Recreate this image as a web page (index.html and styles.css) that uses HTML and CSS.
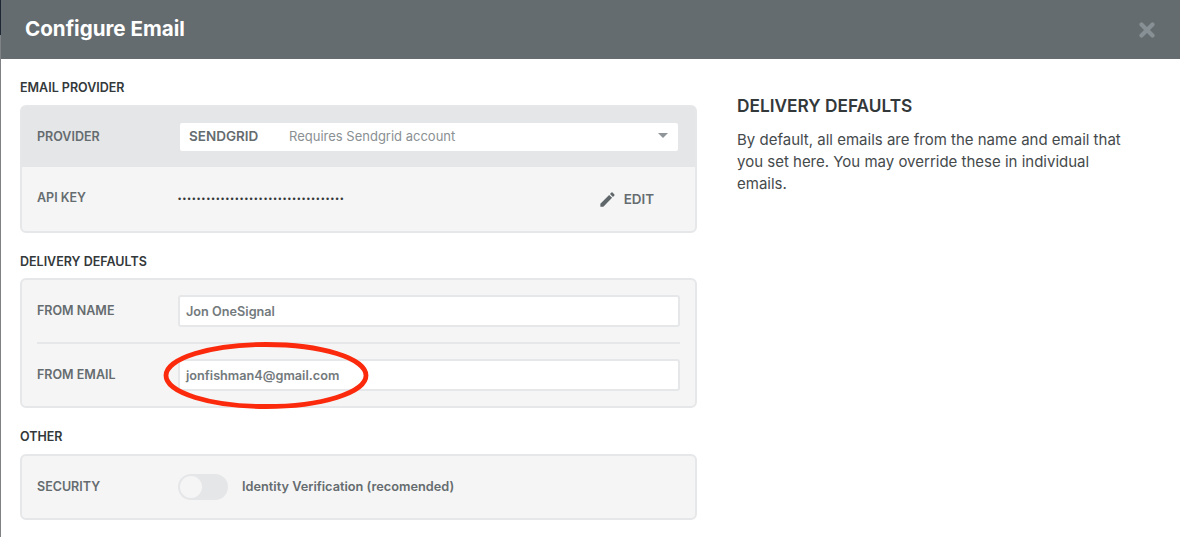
FILE: index.html
```html
<!DOCTYPE html>
<html lang="en">
<head>
<meta charset="utf-8">
<title>Configure Email</title>
<link rel="stylesheet" href="styles.css">
</head>
<body>
<div class="modal">
  <header class="modal-head">
    <h1 class="modal-title">Configure Email</h1>
    <svg class="close" width="16" height="16" viewBox="0 0 16 16"><path d="M2.500 2.500l11 11M13.500 2.500l-11 11" stroke="#879094" stroke-width="4.200" stroke-linecap="round"/></svg>
  </header>
  <div class="modal-body">
    <main class="form-col">
      <h2 class="section-label">EMAIL PROVIDER</h2>
      <section class="panel panel-provider">
        <div class="row row-select">
          <span class="row-label label-wide">PROVIDER</span>
          <div class="select">
            <span class="select-name">SENDGRID</span>
            <span class="select-note">Requires Sendgrid account</span>
            <span class="caret"></span>
          </div>
        </div>
        <div class="row row-key">
          <span class="row-label label-key">API KEY</span>
          <span class="dots">•••••••••••••••••••••••••••••••••••</span>
          <span class="edit">
            <svg width="19" height="19" viewBox="0 0 24 24"><path fill="#5f676a" d="M3 17.250V21h3.750L17.810 9.940l-3.750-3.750L3 17.250zM20.710 7.040a1 1 0 0 0 0-1.410l-2.340-2.340a1 1 0 0 0-1.410 0l-1.830 1.830 3.750 3.750 1.830-1.830z"/></svg>
            EDIT
          </span>
        </div>
      </section>
      <h2 class="section-label">DELIVERY DEFAULTS</h2>
      <section class="panel panel-defaults">
        <div class="row row-field row-divided">
          <span class="row-label">FROM NAME</span>
          <div class="input">Jon OneSignal</div>
        </div>
        <div class="row row-field">
          <span class="row-label">FROM EMAIL</span>
          <div class="input">jonfishman4@gmail.com</div>
          <svg class="annotation" width="210" height="70" viewBox="0 0 210 70"><ellipse cx="105" cy="34.500" rx="100" ry="31" fill="none" stroke="#fb2a0c" stroke-width="4.800"/></svg>
        </div>
      </section>
      <h2 class="section-label">OTHER</h2>
      <section class="panel panel-other">
        <div class="row row-toggle">
          <span class="row-label">SECURITY</span>
          <span class="toggle"><span class="knob"></span></span>
          <span class="toggle-text">Identity Verification (recomended)</span>
        </div>
      </section>
    </main>
    <aside class="help-col">
      <h2 class="help-title">DELIVERY DEFAULTS</h2>
      <p class="help-text">By default, all emails are from the name and email that you set here. You may override these in individual emails.</p>
    </aside>
  </div>
</div>
</body>
</html>
```
FILE: styles.css
```css
* { box-sizing: border-box; }
html, body { margin: 0; height: 100%; overflow: hidden; }
body { background: linear-gradient(#1d2733 0 35px, #7f8385 35px); font-family: "Inter", "Lato", sans-serif; }
.modal { margin-left: 1px; height: 537px; background: #fff; display: flex; flex-direction: column; }
.modal-head { height: 59px; flex: none; background: #656c6f; display: flex; align-items: center; justify-content: space-between; padding: 0 25px 2px 24px; }
.modal-title { margin: 0; color: #fff; font-size: 20.600px; font-weight: 700; }
.close { display: block; margin-top: 2px; }
.modal-body { display: flex; flex: 1; padding-left: 19px; }
.form-col { width: 677px; flex: none; padding-top: 21px; }
.section-label { margin: 0 0 8px; height: 16px; line-height: 16px; font-size: 12.500px; font-weight: 600; color: #33383a; }
.panel { border: 2px solid #e6e7e9; border-radius: 6px; background: #f5f5f5; margin-bottom: 21px; }
.panel-provider { height: 128px; margin-top: 9px; }
.panel-defaults { height: 130px; padding: 0 15px; }
.panel-other { height: 66px; padding: 0 15px; margin-top: 9px; }
.row { display: flex; align-items: center; }
.row-label { width: 141px; flex: none; margin-bottom: 2px; font-size: 12.500px; font-weight: 600; color: #656c6f; }
.label-wide { width: 143px; }
.label-key { margin-bottom: 4px; }
.row-select { height: 60px; background: #e5e6e8; padding: 0 17px 0 15px; }
.select { flex: 1; height: 28px; background: #fff; border-radius: 2px; display: flex; align-items: center; padding: 0 10px 2px 9px; font-size: 13px; }
.select-name { width: 100px; font-size: 13.500px; font-weight: 600; color: #656c6f; }
.select-note { flex: 1; color: #8a9093; }
.caret { width: 0; height: 0; border-left: 5px solid transparent; border-right: 5px solid transparent; border-top: 5px solid #8f9598; margin-bottom: 1px; }
.row-key { height: 64px; padding: 0 41px 0 15px; }
.dots { flex: 1; font-size: 9px; letter-spacing: 1.620px; color: #33383a; font-family: "Liberation Sans", sans-serif; }
.edit { display: flex; align-items: center; gap: 7px; font-size: 13.400px; font-weight: 600; color: #656c6f; }
.row-field { height: 62px; position: relative; }
.row-divided { height: 64px; border-bottom: 2px solid #e6e7e9; }
.input { flex: 1; height: 32px; border: 2px solid #e6e7e9; border-radius: 3px; background: #fff; padding: 0 6px; line-height: 30px; font-size: 12.700px; font-weight: 600; color: #737a7d; }
.annotation { position: absolute; left: 124px; top: -3px; }
.row-toggle { height: 62px; }
.toggle { width: 50px; height: 26px; border-radius: 13px; background: #e5e6e8; padding: 2px; flex: none; }
.knob { display: block; width: 22px; height: 22px; border-radius: 50%; background: #f5f5f5; }
.toggle-text { margin-left: 14px; margin-bottom: 2px; font-size: 12.750px; font-weight: 600; color: #656c6f; }
.help-col { padding: 37px 0 0 40px; width: 440px; }
.help-title { margin: 0 0 13px; font-size: 17.300px; line-height: 20px; font-weight: 600; color: #33383a; }
.help-text { margin: 0; width: 395px; font-size: 15px; line-height: 22px; color: #454a4c; }
```
